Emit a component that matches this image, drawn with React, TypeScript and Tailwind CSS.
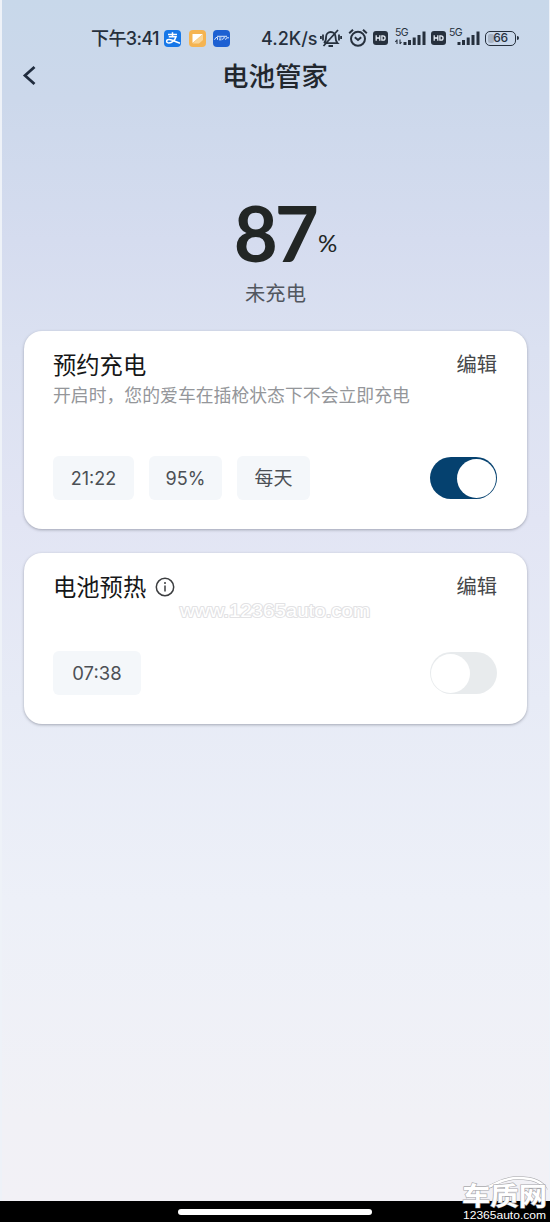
import { useState } from "react";
import { clsx } from "clsx";


function HdBadge() {
  return (
    <svg className="w-[15px] h-[14px] shrink-0" viewBox="0 0 15 14">
      <rect width="15" height="14" rx="3" fill="#26303d" />
      <path d="M3.2 4.2v5.6M6.8 4.2v5.6M3.2 7h3.6" stroke="#e6edf6" strokeWidth="1.3" fill="none" />
      <path d="M8.9 4.8v4.4h1a2.2 2.2 0 0 0 0-4.4z" stroke="#e6edf6" strokeWidth="1.3" fill="none" />
    </svg>
  )
}

function Signal({ data }: { data?: boolean }) {
  return (
    <div className="relative w-[32px] h-[20px] shrink-0">
      <span className="absolute left-0 -top-[2px] text-[10.500px] leading-[14px] tracking-[-0.700px]">5G</span>
      <svg className="w-[32px] h-[20px]" viewBox="0 0 32 20">
        {data && <path d="M2 16v-4.500M0.300 14l1.700-2M5 11.500v4.500M6.500 14l-1.500 2" stroke="#26303d" strokeWidth="1.100" fill="none" />}
        <path d="M10 17v-3M14.500 17v-5M19.200 17v-7.500M24 17v-10M29 17v-13.500" stroke="#26303d" strokeWidth="3" fill="none" />
      </svg>
    </div>
  )
}

function StatusBar() {
  return (
    <div className="flex items-center h-[24px] pl-[91px] text-[#26303d]">
      <span className="w-[73px] pt-[1px] text-[18px] leading-none font-medium whitespace-nowrap tracking-[-0.600px]">下午3:41</span>
      <svg className="w-[17px] h-[17px] shrink-0" viewBox="0 0 17 17">
        <rect width="17" height="17" rx="4" fill="#1677e8" />
        <path d="M4 4.400h9M8.500 2.200v4.400M4.800 6.700h7.200C11 10 8 13 5 13c-3.300 0-3-3.500 0-3.500 3 0 6 2 11 3.800" stroke="#fff" strokeWidth="1.500" fill="none" />
      </svg>
      <svg className="w-[17px] h-[17px] ml-[8px] shrink-0" viewBox="0 0 17 17">
        <rect width="17" height="17" rx="4" fill="#f5b452" />
        <path d="M3.500 4h10.500L3.500 13z" fill="#fff" />
        <path d="M14 4v6l-4 3.500H3.500z" fill="#fad596" />
      </svg>
      <svg className="w-[17px] h-[17px] ml-[7px] shrink-0" viewBox="0 0 17 17">
        <rect width="17" height="17" rx="4" fill="#1d60d2" />
        <path d="M1.500 9.800l1.500-2.300h1.500v2.300M6 8h2.500M6 9.800h2.500M9.500 9.800l1-2h1.500M12.500 9.800l1-2h2.500M4 6.300h10" stroke="#dce8fa" strokeWidth="1" fill="none" />
      </svg>
      <span className="w-[59px] pt-[1px] ml-[31px] text-[18px] leading-none font-[450] whitespace-nowrap">4.2K/s</span>
      <svg className="w-[22px] h-[20px] shrink-0" viewBox="0 0 22 20" fill="none" stroke="#26303d" strokeWidth="1.800">
        <path d="M4.500 15.200h13c-2-2-2-3.500-2-6.500a4.700 4.700 0 0 0-9.400 0c0 3 0 4.500-2.100 6.500M8.500 18h4.500M3.500 18L18 2M3 6.500v6M0.900 8v3M19 6.500v6M21.100 8v3" />
      </svg>
      <svg className="w-[20px] h-[20px] ml-[6px] shrink-0" viewBox="0 0 20 20" fill="none" stroke="#26303d" strokeWidth="2">
        <circle cx="10" cy="10.800" r="7" />
        <path d="M6.800 9.300L10 12l3.200-2.700M1.200 5.200L5 1.700M18.800 5.200L15 1.700" />
      </svg>
      <div className="flex items-center ml-[5px]">
        <HdBadge />
        <div className="ml-[7px]"><Signal data /></div>
        <div className="ml-[4px]"><HdBadge /></div>
        <div className="ml-[3px]"><Signal /></div>
      </div>
      <div className="relative flex items-center justify-center w-[31px] h-[15px] ml-[4px] border-[1.5px] border-[#26303d] rounded-[5px] shrink-0">
        <span className="absolute left-[2px] top-[2px] w-[6px] h-[9px] rounded-[2px] bg-[#a9b5c6]"></span>
        <span className="relative text-[12px] leading-none font-medium tracking-[-0.400px]">66</span>
        <span className="absolute -right-[4px] top-[4px] w-[2px] h-[4px] rounded-r bg-[#26303d]"></span>
      </div>
    </div>
  )
}

function Toggle({ on, onClick }: { on: boolean; onClick: () => void }) {
  return (
    <button
      className={clsx("flex items-center w-[67px] h-[41.500px] px-[1.300px] rounded-full hover:cursor-pointer", on ? "justify-end bg-[#05416f]" : "justify-start bg-[#e8ebed]")}
      onClick={onClick}
    >
      <span className="w-[39px] h-[39px] rounded-full bg-white"></span>
    </button>
  )
}

function Chip({ label, className }: { label: string; className: string }) {
  return <div className={clsx("flex items-center justify-center h-[44px] pt-[1px] rounded-md bg-[#f4f7fa] text-[#4c5055] leading-none", className)}>{label}</div>
}

function Watermark() {
  return (
    <>
      <div className="absolute left-[180px] top-[601px] w-[190px] h-[20px]">
        <svg className="w-[192px] h-[20px] overflow-visible" viewBox="0 0 192 20">
          <text x="0" y="16" fontSize="18" fontFamily="Liberation Sans, sans-serif" fill="#fff" stroke="#e2e2e4" strokeWidth="2" strokeLinejoin="round" paintOrder="stroke" textLength="190" lengthAdjust="spacingAndGlyphs">www.12365auto.com</text>
        </svg>
      </div>
      <div className="absolute right-0 bottom-0 w-[90px] h-[48px]">
        <svg className="w-[90px] h-[48px] overflow-visible" viewBox="0 0 90 48">
          <path d="M4 14h20c9 0 14-10 34-10 17 0 25 5 28 12" fill="none" stroke="#a2a2a6" strokeWidth="3.600" />
          <path d="M4 14h20c9 0 14-10 34-10 17 0 25 5 28 12" fill="none" stroke="#fff" strokeWidth="2.600" />
          <text x="2" y="31" fontSize="25" fontWeight="700" fontFamily="Noto Sans CJK SC, sans-serif" fill="#fff" stroke="#a8a8ac" strokeWidth="1.200" paintOrder="stroke" textLength="85" lengthAdjust="spacingAndGlyphs">车质网</text>
          <text x="3" y="45" fontSize="11" fontFamily="Liberation Sans, sans-serif" fill="#fff" textLength="83" lengthAdjust="spacingAndGlyphs">12365auto.com</text>
        </svg>
      </div>
    </>
  )
}

function App() {
  const [charging, setCharging] = useState(true);
  const [preheat, setPreheat] = useState(false);
  return (
    <div className="relative flex flex-col w-[550px] h-[1222px] overflow-hidden bg-black font-['Inter','Noto_Sans_CJK_SC',sans-serif]">
      <div className="flex flex-col h-[1201px] pt-[26px] border-l-2 border-r border-[#eef2f8] bg-[linear-gradient(180deg,#c8d8ea_0px,#ccd8eb_100px,#d5dcef_240px,#dbe1f1_350px,#e2e5f4_520px,#e7ebf6_700px,#edf0f8_900px,#f1f1f6_1120px,#f2f1f6_1201px)]">
        <div className="-ml-[2px]">
          <StatusBar />
          <div className="relative flex items-center justify-center h-[52px]">
            <button className="absolute left-[22px] top-[15px] hover:cursor-pointer">
              <svg className="w-[15px] h-[21px]" viewBox="0 0 15 21"><path d="M12.500 2L3 10.500l9.500 8.500" fill="none" stroke="#202c3e" strokeWidth="2.800" /></svg>
            </button>
            <h1 className="pl-[1px] text-[26.500px] leading-none font-medium text-[#22272e]">电池管家</h1>
          </div>
        </div>

        <div className="flex items-end justify-center h-[166px] pl-[20px] text-[#222625]">
          <span className="mb-[-1px] text-[76px] leading-[72px] font-bold tracking-[-3px] font-['Lato']">87</span>
          <span className="mb-[13px] ml-[2px] text-[24px] leading-none font-['Lato']">%</span>
        </div>
        <p className="mt-[16px] text-center text-[20.300px] leading-[20px] text-[#51565e]">未充电</p>

        <div className="flex flex-col gap-[24px] mt-[27px] ml-[22px] mr-[22px]">
          <div className="h-[198px] pl-[29px] pr-[30px] pt-[22px] bg-white rounded-[18px] shadow-[0_1px_3px_rgba(80,85,100,0.45)]">
            <div className="flex justify-between items-center h-[24px]">
              <h2 className="pt-[1px] text-[23.300px] leading-none text-[#161718]">预约充电</h2>
              <button className="pt-[1px] text-[20.300px] leading-none text-[#46484a] hover:cursor-pointer">编辑</button>
            </div>
            <p className="mt-[9px] text-[17.850px] leading-[20px] text-[#94969a] whitespace-nowrap">开启时，您的爱车在插枪状态下不会立即充电</p>
            <div className="flex justify-between items-center mt-[50px]">
              <div className="flex gap-[15px]">
                <Chip label="21:22" className="w-[81px] text-[18px]" />
                <Chip label="95%" className="w-[73px] text-[18px]" />
                <Chip label="每天" className="w-[73px] text-[19px]" />
              </div>
              <Toggle on={charging} onClick={() => setCharging(prev => !prev)} />
            </div>
          </div>

          <div className="h-[171px] pl-[29px] pr-[30px] pt-[22px] bg-white rounded-[18px] shadow-[0_1px_3px_rgba(80,85,100,0.45)]">
            <div className="flex justify-between items-center h-[24px]">
              <div className="flex items-center">
                <h2 className="pt-[1px] text-[23.300px] leading-none text-[#161718]">电池预热</h2>
                <svg className="w-[20px] h-[20px] ml-[9px]" viewBox="0 0 20 20">
                  <circle cx="10" cy="10" r="8.700" fill="none" stroke="#3c3e40" strokeWidth="1.500" />
                  <path d="M10 8.500v6M10 5v2" stroke="#3c3e40" strokeWidth="1.500" />
                </svg>
              </div>
              <button className="pt-[1px] text-[20.300px] leading-none text-[#46484a] hover:cursor-pointer">编辑</button>
            </div>
            <div className="flex justify-between items-center mt-[52px]">
              <Chip label="07:38" className="w-[88px] text-[18.500px]" />
              <Toggle on={preheat} onClick={() => setPreheat(prev => !prev)} />
            </div>
          </div>
        </div>
      </div>
      <div className="flex justify-center h-[21px] pt-[8px]">
        <div className="w-[194px] h-[6px] rounded-full bg-white"></div>
      </div>
      <Watermark />
    </div>
  )
}

export default App
